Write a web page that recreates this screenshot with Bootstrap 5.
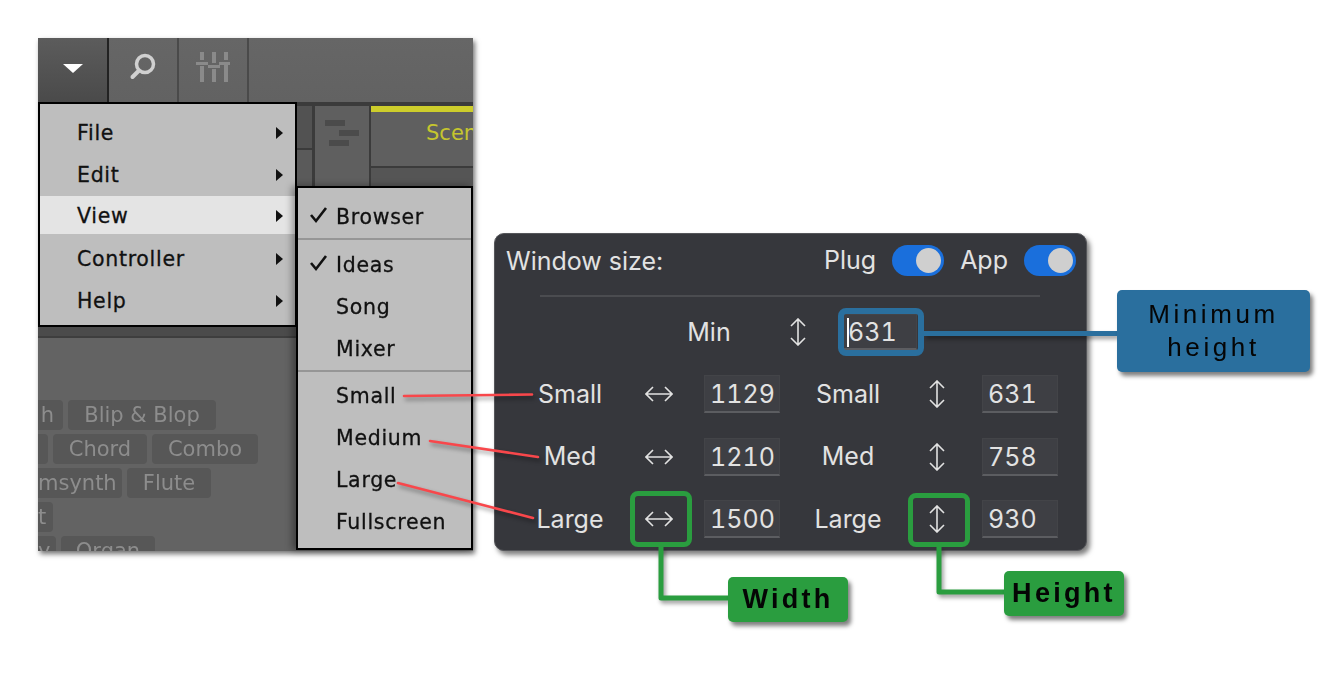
<!DOCTYPE html>
<html lang="en">
<head>
<meta charset="utf-8">
<title>Window size</title>
<link href="https://cdn.jsdelivr.net/npm/bootstrap@5.3.0/dist/css/bootstrap.min.css" rel="stylesheet">
<style>
html,body{margin:0;background:#fff;overflow:hidden}
.sheet{position:relative;width:1339px;height:674px;background:#fff}
/* left app window */
.app-win{position:absolute;left:38px;top:38px;width:435px;height:513px;background:#636363;box-shadow:2px 3px 5px rgba(0,0,0,.55)}
.app-clip{position:absolute;inset:0;overflow:hidden;filter:blur(.35px)}
.tool-bar{height:64px;background:linear-gradient(#666,#626262)}
.tool-btn{width:70px;border-right:2px solid #4a4a4a;flex:none}
.tool-btn svg{display:block}
.tool-btn.active-btn{width:71px;background:linear-gradient(#5c5c5c,#4a4a4a);border-right:2px solid #222;padding-bottom:3px}
.raise-ico{padding-bottom:6px}
.mid-band{height:225px;background:#3b3b3b}
.mid-gap{width:259px;flex:none}
.mid-stack{width:15px;margin-top:4px;flex:none}
.mid-stack div:first-child{height:44px;background:#525252;border-bottom:2px solid #3b3b3b}
.mid-stack div:last-child{flex:1;background:#5a5a5a}
.mid-panel{width:54px;margin:4px 2px 0 3px;background:#5f5f5f;flex:none}
.mid-panel i{display:block;height:6px;background:#4b4b4b;position:absolute}
.mid-tab{flex:1;min-width:0;margin-top:4px;background:#555}
.tab-top{height:62px;background:#5f5f5f;border-top:6px solid #cdcd2b;border-bottom:2px solid #3b3b3b;color:#c6c62e;font:21px/42px "DejaVu Sans",sans-serif;padding-left:55px;white-space:nowrap;overflow:hidden}
.strip{height:11px;background:#4b4b4b;border-bottom:2px solid #3e3e3e}
.tag-zone{padding-top:62px;gap:4px}
.tag-row{gap:5px;height:30px}
.tag-item{height:30px;background:#575757;border-radius:4px;color:#8d8d8d;font:21px/30px "DejaVu Sans",sans-serif;text-align:center;white-space:nowrap;overflow:hidden;flex:none}
.lead-tag{text-align:right;padding-right:9px;border-radius:0 4px 4px 0}
.w25{width:25px}.w10{width:10px}.w84{width:84px}.w15{width:15px}.w18{width:18px}
.w148{width:148px}.w94{width:94px}.w106{width:106px}.w84b{width:84px}.w94b{width:94px}
.pop-menu{position:absolute;background:#bebebe;border:2px solid #000;color:#111;font:400 20.5px/1 "DejaVu Sans",sans-serif;letter-spacing:.7px;-webkit-text-stroke:.3px #111}
.menu-a{left:0;top:64px;width:259px;height:225px;padding-top:8px}
.menu-b{left:258px;top:148px;width:177px;height:364px;padding-top:8px;box-shadow:-4px 0 7px rgba(0,0,0,.35)}
.menu-line{height:42px;padding-left:37px;padding-right:12px}
.menu-line.on{background:#e4e4e4;height:38px;margin-bottom:4px;padding-top:2px}
.arrow-r{width:0;height:0;border-left:7px solid #111;border-top:6px solid transparent;border-bottom:6px solid transparent}
.sub-line{height:42px;padding-left:38px;position:relative}
.sub-line svg{position:absolute;left:11px;top:10px}
.sub-sep{height:2px;background:#969696}
.first-sub{height:42px}
.gap-four{margin-top:4px}
.gap-three{margin-top:3px}
/* dark panel */
.dark-panel{position:absolute;left:494px;top:233px;width:593px;height:318px;background:#36373c;border:1.5px solid #55565a;border-radius:10px;box-shadow:3px 4px 5px rgba(0,0,0,.5);color:#e2e2e2;font:25px/1 Inter,sans-serif}
.panel-head{padding:11px 10px 0 11px;height:61px}
.switch-box{width:52px;height:31px;border-radius:16px;background:#1a6fdc;position:relative;flex:none}
.switch-box::after{content:"";position:absolute;right:3px;top:3px;width:25px;height:25px;border-radius:50%;background:#cfcfcf}
.head-sw{gap:16px}
.head-title{margin-top:4px}
.panel-rule{height:2px;background:#4b4c50;margin:0 46px 0 45px}
.min-row{padding-left:170px;height:36px;margin-top:17px}
.size-grid{display:grid;grid-template-columns:88px 90px 76px 24px 88px 90px 76px;grid-auto-rows:38px;row-gap:24.5px;margin:25px 0 0 31px}
.cell-mid{display:flex;align-items:center;justify-content:center}
.cell-lbl{width:88px}
.cell-ico{width:90px}
.size-box.form-control{width:76px;height:38px;padding:0 5px;background:#3e3f44;border:1px solid #434448;border-bottom:2px solid #5c5d61;border-radius:0;color:#e2e2e2;font:inherit;font-size:25px;line-height:36px;font-variant-numeric:tabular-nums}
.size-box.min-box{height:36px;width:74px;position:relative;padding-left:4px;line-height:34px}
.caret-bar{position:absolute;left:3px;top:3px;width:2px;height:29px;background:#fff}
/* callouts */
.note{position:absolute;color:#050505;font-family:"Liberation Sans",sans-serif;text-align:center;border-radius:5px;box-shadow:3px 4px 4px rgba(0,0,0,.5)}
.note-blue{left:1117px;top:290px;width:193px;height:82px;background:#2a6f9e;font-size:26px;line-height:33px;letter-spacing:3.6px;padding-top:8px}
.note-green{background:#2a9d3f;font-size:27px;font-weight:700;height:45px;width:120px;line-height:45px;letter-spacing:3.3px}
.note-w{left:728px;top:577px}
.note-h{left:1004px;top:571px}
.ring{position:absolute;border-radius:8px;border:5px solid #2a9d3f}
.ring-w{left:630px;top:491px;width:62px;height:56px}
.ring-h{left:908px;top:493px;width:62px;height:54px}
.ring-b{left:838px;top:308px;width:86px;height:48px;border-color:#2a6f9e;border-width:6px}
.wires{position:absolute;left:0;top:0;width:1339px;height:674px;pointer-events:none}
.wire-set{filter:drop-shadow(2px 3px 2px rgba(0,0,0,.4))}
</style>
</head>
<body>
<div class="sheet">
  <div class="app-win">
    <div class="app-clip d-flex flex-column">
      <div class="tool-bar d-flex flex-shrink-0">
        <div class="tool-btn active-btn d-flex align-items-center justify-content-center">
          <svg width="20" height="10" viewBox="0 0 20 10"><path d="M0 0H20L10 9Z" fill="#fff"/></svg>
        </div>
        <div class="tool-btn raise-ico d-flex align-items-center justify-content-center">
          <svg width="28" height="32" viewBox="0 0 28 32"><circle cx="16" cy="13" r="8.5" fill="none" stroke="#d0d0d0" stroke-width="3.5"/><path d="M9.5 20L3.5 26" stroke="#d0d0d0" stroke-width="4" stroke-linecap="round"/></svg>
        </div>
        <div class="tool-btn raise-ico d-flex align-items-center justify-content-center">
          <svg width="34" height="32" viewBox="0 0 34 32"><g fill="#8a8a8a"><rect x="4" y="1" width="4" height="8"/><rect x="4" y="15" width="4" height="16"/><rect x="0" y="11" width="12" height="3"/><rect x="16" y="1" width="4" height="11"/><rect x="16" y="18" width="4" height="13"/><rect x="12" y="14" width="12" height="3"/><rect x="28" y="1" width="4" height="8"/><rect x="28" y="14" width="4" height="17"/><rect x="23" y="11" width="11" height="3"/></g></svg>
        </div>
      </div>
      <div class="mid-band d-flex flex-shrink-0">
        <div class="mid-gap"></div>
        <div class="mid-stack d-flex flex-column"><div></div><div></div></div>
        <div class="mid-panel position-relative">
          <i style="left:10px;top:14px;width:20px"></i><i style="left:24px;top:24px;width:20px"></i><i style="left:14px;top:34px;width:20px"></i>
        </div>
        <div class="mid-tab"><div class="tab-top">Scene 1</div></div>
      </div>
      <div class="strip flex-shrink-0"></div>
      <div class="tag-zone d-flex flex-column">
        <div class="tag-row d-flex"><div class="tag-item lead-tag w25">h</div><div class="tag-item w148">Blip &amp; Blop</div></div>
        <div class="tag-row d-flex"><div class="tag-item lead-tag w10"></div><div class="tag-item w94">Chord</div><div class="tag-item w106">Combo</div></div>
        <div class="tag-row d-flex"><div class="tag-item lead-tag w84">msynth</div><div class="tag-item w84b">Flute</div></div>
        <div class="tag-row d-flex"><div class="tag-item lead-tag w15">t</div></div>
        <div class="tag-row d-flex"><div class="tag-item lead-tag w18">y</div><div class="tag-item w94b">Organ</div></div>
      </div>
    </div>
    <div class="pop-menu menu-a d-flex flex-column">
      <div class="menu-line d-flex align-items-center justify-content-between"><span>File</span><span class="arrow-r"></span></div>
      <div class="menu-line d-flex align-items-center justify-content-between"><span>Edit</span><span class="arrow-r"></span></div>
      <div class="menu-line on d-flex align-items-center justify-content-between"><span>View</span><span class="arrow-r"></span></div>
      <div class="menu-line d-flex align-items-center justify-content-between"><span>Controller</span><span class="arrow-r"></span></div>
      <div class="menu-line d-flex align-items-center justify-content-between"><span>Help</span><span class="arrow-r"></span></div>
    </div>
    <div class="pop-menu menu-b d-flex flex-column">
      <div class="sub-line first-sub d-flex align-items-center"><svg width="20" height="18" viewBox="0 0 20 18"><path d="M2 9L7 15L17 2" fill="none" stroke="#111" stroke-width="2.6"/></svg>Browser</div>
      <div class="sub-sep"></div>
      <div class="sub-line gap-four d-flex align-items-center"><svg width="20" height="18" viewBox="0 0 20 18"><path d="M2 9L7 15L17 2" fill="none" stroke="#111" stroke-width="2.6"/></svg>Ideas</div>
      <div class="sub-line d-flex align-items-center">Song</div>
      <div class="sub-line d-flex align-items-center">Mixer</div>
      <div class="sub-sep"></div>
      <div class="sub-line gap-three d-flex align-items-center">Small</div>
      <div class="sub-line d-flex align-items-center">Medium</div>
      <div class="sub-line d-flex align-items-center">Large</div>
      <div class="sub-line d-flex align-items-center">Fullscreen</div>
    </div>
  </div>

  <div class="dark-panel">
    <div class="panel-head d-flex align-items-start justify-content-between">
      <span class="head-title">Window size:</span>
      <div class="d-flex align-items-center head-sw">
        <span>Plug</span><span class="switch-box"></span><span>App</span><span class="switch-box"></span>
      </div>
    </div>
    <div class="panel-rule"></div>
    <div class="min-row d-flex align-items-center">
      <div class="cell-lbl text-center">Min</div>
      <div class="cell-ico cell-mid"><svg width="18" height="28" viewBox="0 0 18 28"><path d="M9 1V27M2 8L9 1L16 8M2 20L9 27L16 20" fill="none" stroke="#e2e2e2" stroke-width="1.6"/></svg></div>
      <div class="form-control size-box min-box"><span class="caret-bar"></span>631</div>
    </div>
    <div class="size-grid">
      <div class="cell-mid">Small</div>
      <div class="cell-mid"><svg width="28" height="18" viewBox="0 0 28 18"><path d="M1 9H27M8 2L1 9L8 16M20 2L27 9L20 16" fill="none" stroke="#e2e2e2" stroke-width="1.6"/></svg></div>
      <div class="form-control size-box">1129</div><div></div>
      <div class="cell-mid">Small</div>
      <div class="cell-mid"><svg width="18" height="28" viewBox="0 0 18 28"><path d="M9 1V27M2 8L9 1L16 8M2 20L9 27L16 20" fill="none" stroke="#e2e2e2" stroke-width="1.6"/></svg></div>
      <div class="form-control size-box">631</div>

      <div class="cell-mid">Med</div>
      <div class="cell-mid"><svg width="28" height="18" viewBox="0 0 28 18"><path d="M1 9H27M8 2L1 9L8 16M20 2L27 9L20 16" fill="none" stroke="#e2e2e2" stroke-width="1.6"/></svg></div>
      <div class="form-control size-box">1210</div><div></div>
      <div class="cell-mid">Med</div>
      <div class="cell-mid"><svg width="18" height="28" viewBox="0 0 18 28"><path d="M9 1V27M2 8L9 1L16 8M2 20L9 27L16 20" fill="none" stroke="#e2e2e2" stroke-width="1.6"/></svg></div>
      <div class="form-control size-box">758</div>

      <div class="cell-mid">Large</div>
      <div class="cell-mid"><svg width="28" height="18" viewBox="0 0 28 18"><path d="M1 9H27M8 2L1 9L8 16M20 2L27 9L20 16" fill="none" stroke="#e2e2e2" stroke-width="1.6"/></svg></div>
      <div class="form-control size-box">1500</div><div></div>
      <div class="cell-mid">Large</div>
      <div class="cell-mid"><svg width="18" height="28" viewBox="0 0 18 28"><path d="M9 1V27M2 8L9 1L16 8M2 20L9 27L16 20" fill="none" stroke="#e2e2e2" stroke-width="1.6"/></svg></div>
      <div class="form-control size-box">930</div>
    </div>
  </div>

  <svg class="wires" viewBox="0 0 1339 674">
    <g class="wire-set" fill="none" stroke-linejoin="round">
      <path d="M404 396L532 394.5M430 441L538 457M398 483L533 518" stroke="#f8474b" stroke-width="2.6" stroke-linecap="round"/>
      <path d="M924 333.500H1117" stroke="#2a6f9e" stroke-width="5"/>
      <path d="M661 547V598H728" stroke="#2a9d3f" stroke-width="5"/>
      <path d="M939 547V592H1004" stroke="#2a9d3f" stroke-width="5"/>
    </g>
  </svg>
  <div class="ring ring-w"></div>
  <div class="ring ring-h"></div>
  <div class="ring ring-b"></div>
  <div class="note note-blue">Minimum<br>height</div>
  <div class="note note-green note-w">Width</div>
  <div class="note note-green note-h">Height</div>
</div>
<script src="https://cdn.jsdelivr.net/npm/bootstrap@5.3.0/dist/js/bootstrap.bundle.min.js"></script>
</body>
</html>
